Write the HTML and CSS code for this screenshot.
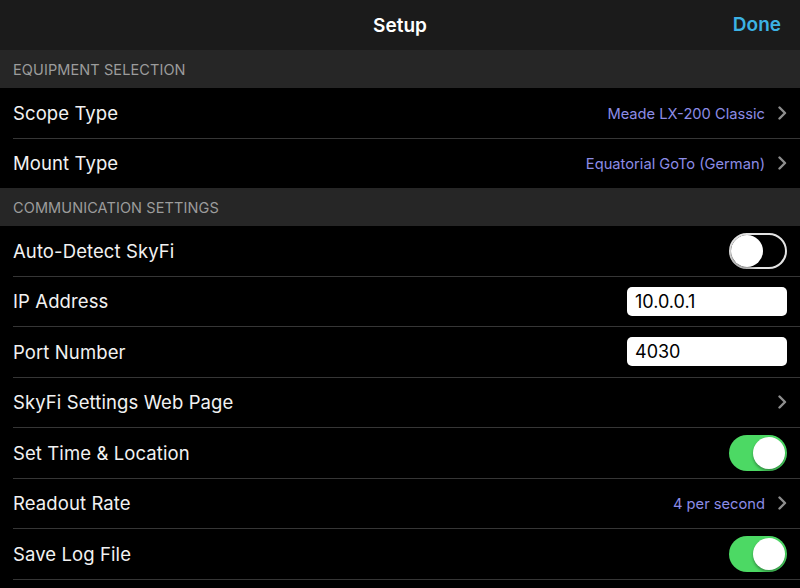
FILE: index.html
```html
<!DOCTYPE html>
<html>
<head>
<meta charset="utf-8">
<link rel="stylesheet" href="styles.css">
</head>
<body>
<div class="nav">
  <div class="nav-title">Setup</div>
  <div class="nav-done">Done</div>
</div>
<div class="section-header">EQUIPMENT SELECTION</div>
<div class="group">
  <div class="row">
    <span class="label">Scope Type</span>
    <span class="value">Meade LX-200 Classic</span>
    <svg class="chev" viewBox="0 0 9 14"><path d="M1.5 1.5 L7 7 L1.5 12.5" fill="none" stroke="#8e8e8e" stroke-width="2.4" stroke-linecap="round" stroke-linejoin="round"/></svg>
  </div>
  <div class="row last">
    <span class="label">Mount Type</span>
    <span class="value">Equatorial GoTo (German)</span>
    <svg class="chev" viewBox="0 0 9 14"><path d="M1.5 1.5 L7 7 L1.5 12.5" fill="none" stroke="#8e8e8e" stroke-width="2.4" stroke-linecap="round" stroke-linejoin="round"/></svg>
  </div>
</div>
<div class="section-header">COMMUNICATION SETTINGS</div>
<div class="group">
  <div class="row">
    <span class="label">Auto-Detect SkyFi</span>
    <span class="toggle off"><span class="knob"></span></span>
  </div>
  <div class="row">
    <span class="label">IP Address</span>
    <span class="field">10.0.0.1</span>
  </div>
  <div class="row">
    <span class="label">Port Number</span>
    <span class="field">4030</span>
  </div>
  <div class="row">
    <span class="label">SkyFi Settings Web Page</span>
    <svg class="chev" viewBox="0 0 9 14"><path d="M1.5 1.5 L7 7 L1.5 12.5" fill="none" stroke="#8e8e8e" stroke-width="2.4" stroke-linecap="round" stroke-linejoin="round"/></svg>
  </div>
  <div class="row">
    <span class="label">Set Time &amp; Location</span>
    <span class="toggle on"><span class="knob"></span></span>
  </div>
  <div class="row">
    <span class="label">Readout Rate</span>
    <span class="value">4 per second</span>
    <svg class="chev" viewBox="0 0 9 14"><path d="M1.5 1.5 L7 7 L1.5 12.5" fill="none" stroke="#8e8e8e" stroke-width="2.4" stroke-linecap="round" stroke-linejoin="round"/></svg>
  </div>
  <div class="row">
    <span class="label">Save Log File</span>
    <span class="toggle on"><span class="knob"></span></span>
  </div>
</div>
</body>
</html>
```
FILE: styles.css
```css
html, body {
  margin: 0;
  padding: 0;
  background: #000;
  width: 800px;
  height: 588px;
  overflow: hidden;
  font-family: Inter, "Liberation Sans", sans-serif;
  color: #fff;
}
.nav {
  height: 50px;
  background: #1b1b1b;
  display: flex;
  align-items: center;
  justify-content: center;
  position: relative;
}
.nav-title {
  font-size: 19px;
  font-weight: 600;
  color: #fff;
}
.nav-done {
  position: absolute;
  right: 19px;
  top: 13px;
  font-size: 19px;
  font-weight: 600;
  color: #3cb2e4;
}
.section-header {
  height: 38px;
  background: #262626;
  box-sizing: border-box;
  padding-left: 13px;
  display: flex;
  align-items: center;
  font-size: 14.5px;
  color: #9c9c9c;
  letter-spacing: 0.1px;
}
.group {
  display: flex;
  flex-direction: column;
}
.row {
  height: 50.5px;
  box-sizing: border-box;
  margin-left: 13px;
  padding-right: 13px;
  display: flex;
  align-items: center;
  border-bottom: 1px solid #363636;
}
.row.last {
  border-bottom: none;
  height: 49.5px;
}
.label {
  flex: 1;
  font-size: 18.5px;
  color: #f2f2f2;
  letter-spacing: 0.1px;
}
.value {
  font-size: 14.7px;
  color: #8c8ce6;
  margin-right: 13px;
  padding-top: 2px;
}
.chev {
  width: 9px;
  height: 14px;
  display: block;
}
.field {
  width: 160px;
  height: 29px;
  box-sizing: border-box;
  background: #fff;
  border-radius: 5px;
  color: #000;
  font-size: 18px;
  padding-left: 8px;
  display: flex;
  align-items: center;
}
.toggle {
  width: 58px;
  height: 36px;
  border-radius: 18px;
  box-sizing: border-box;
  position: relative;
  display: block;
}
.toggle.off {
  border: 2px solid #e3e3e3;
  background: #000;
}
.toggle.on {
  background: #4cd964;
}
.knob {
  position: absolute;
  width: 32px;
  height: 32px;
  border-radius: 50%;
  background: #fff;
  box-shadow: 0 2px 3px rgba(0,0,0,0.35);
}
.toggle.off .knob {
  left: 0;
  top: 0;
}
.toggle.on .knob {
  right: 2px;
  top: 2px;
}
```
